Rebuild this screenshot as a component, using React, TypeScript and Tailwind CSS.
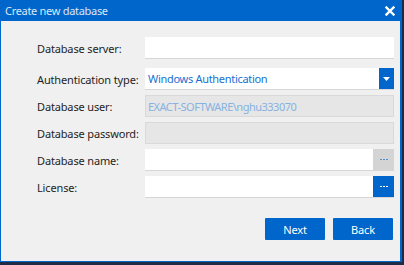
import React from "react";

const font = { fontFamily: '"Noto Sans", "Open Sans", sans-serif' };

function Row({ label, children }: { label: string; children: React.ReactNode }) {
  return (
    <div className="flex items-center h-[22px]">
      <div className="w-[108px] text-[11px] tracking-[-0.15px] text-[#1e1e1e] leading-none whitespace-nowrap">{label}</div>
      <div className="w-[249px] h-[22px]">{children}</div>
    </div>
  );
}

export default function App() {
  return (
    <div className="w-[404px] h-[265px] bg-[#1d2b45]" style={font}>
      <div className="w-[402px] h-[262px] bg-[#0066cc] flex flex-col pl-px pr-[2px] pb-px">
        <div className="h-[21px] flex items-center justify-between pl-[4px] pr-[5px] shrink-0">
          <span className="text-[11px] tracking-[-0.3px] text-[#dbe6f5] leading-none">Create new database</span>
          <svg width="10" height="10" viewBox="0 0 10 10">
            <path d="M1.5 1.5 L8.5 8.5 M8.5 1.5 L1.5 8.5" stroke="#ffffff" strokeWidth="2.4" strokeLinecap="square" />
          </svg>
        </div>
        <div className="flex-1 bg-[#f0f0f0] pl-[36px] pt-[16px] flex flex-col">
          <div className="flex flex-col gap-[5px]">
            <div className="mb-[4px]">
              <Row label="Database server:">
                <div className="w-full h-full bg-white border-b border-[#d6d6d6]" />
              </Row>
            </div>
            <Row label="Authentication type:">
              <div className="w-full h-full bg-white border-b border-[#d6d6d6] flex items-center">
                <span className="flex-1 pl-[3px] text-[11px] tracking-[-0.3px] text-[#1a6fd1] leading-none">Windows Authentication</span>
                <div className="w-[15px] h-full bg-[#0066cc] flex items-center justify-center">
                  <svg width="7" height="4" viewBox="0 0 7 4">
                    <path d="M0 0 H7 L3.5 4 Z" fill="#ffffff" />
                  </svg>
                </div>
              </div>
            </Row>
            <Row label="Database user:">
              <div className="w-full h-full bg-[#e6e6e6] border border-[#d9d9d9] flex items-center">
                <span className="pl-[2px] text-[11px] tracking-[-0.5px] text-[#86b2e2] leading-none">EXACT-SOFTWARE\nghu333070</span>
              </div>
            </Row>
            <Row label="Database password:">
              <div className="w-full h-full bg-[#e6e6e6] border border-[#d9d9d9]" />
            </Row>
            <Row label="Database name:">
              <div className="w-full h-full bg-white border-b border-[#d6d6d6] flex">
                <div className="flex-1" />
                <div className="w-[21px] h-full bg-[#d4d4d4] flex items-center justify-center gap-px">
                  <span className="w-[2px] h-px bg-[#5b8ed0]" />
                  <span className="w-[2px] h-px bg-[#5b8ed0]" />
                  <span className="w-[2px] h-px bg-[#5b8ed0]" />
                </div>
              </div>
            </Row>
            <Row label="License:">
              <div className="w-full h-full bg-white border-b border-[#d6d6d6] flex">
                <div className="flex-1" />
                <div className="w-[21px] h-full bg-[#0066cc] flex items-center justify-center gap-px">
                  <span className="w-[2px] h-px bg-white" />
                  <span className="w-[2px] h-px bg-white" />
                  <span className="w-[2px] h-px bg-white" />
                </div>
              </div>
            </Row>
          </div>
          <div className="flex justify-end gap-[8px] mt-[20px] pr-[7px]">
            <button className="w-[60px] h-[22px] bg-[#0066cc] text-white text-[11px] tracking-[-0.15px] leading-none rounded-[1px]">Next</button>
            <button className="w-[60px] h-[22px] bg-[#0066cc] text-white text-[11px] tracking-[-0.15px] leading-none rounded-[1px]">Back</button>
          </div>
        </div>
      </div>
    </div>
  );
}
